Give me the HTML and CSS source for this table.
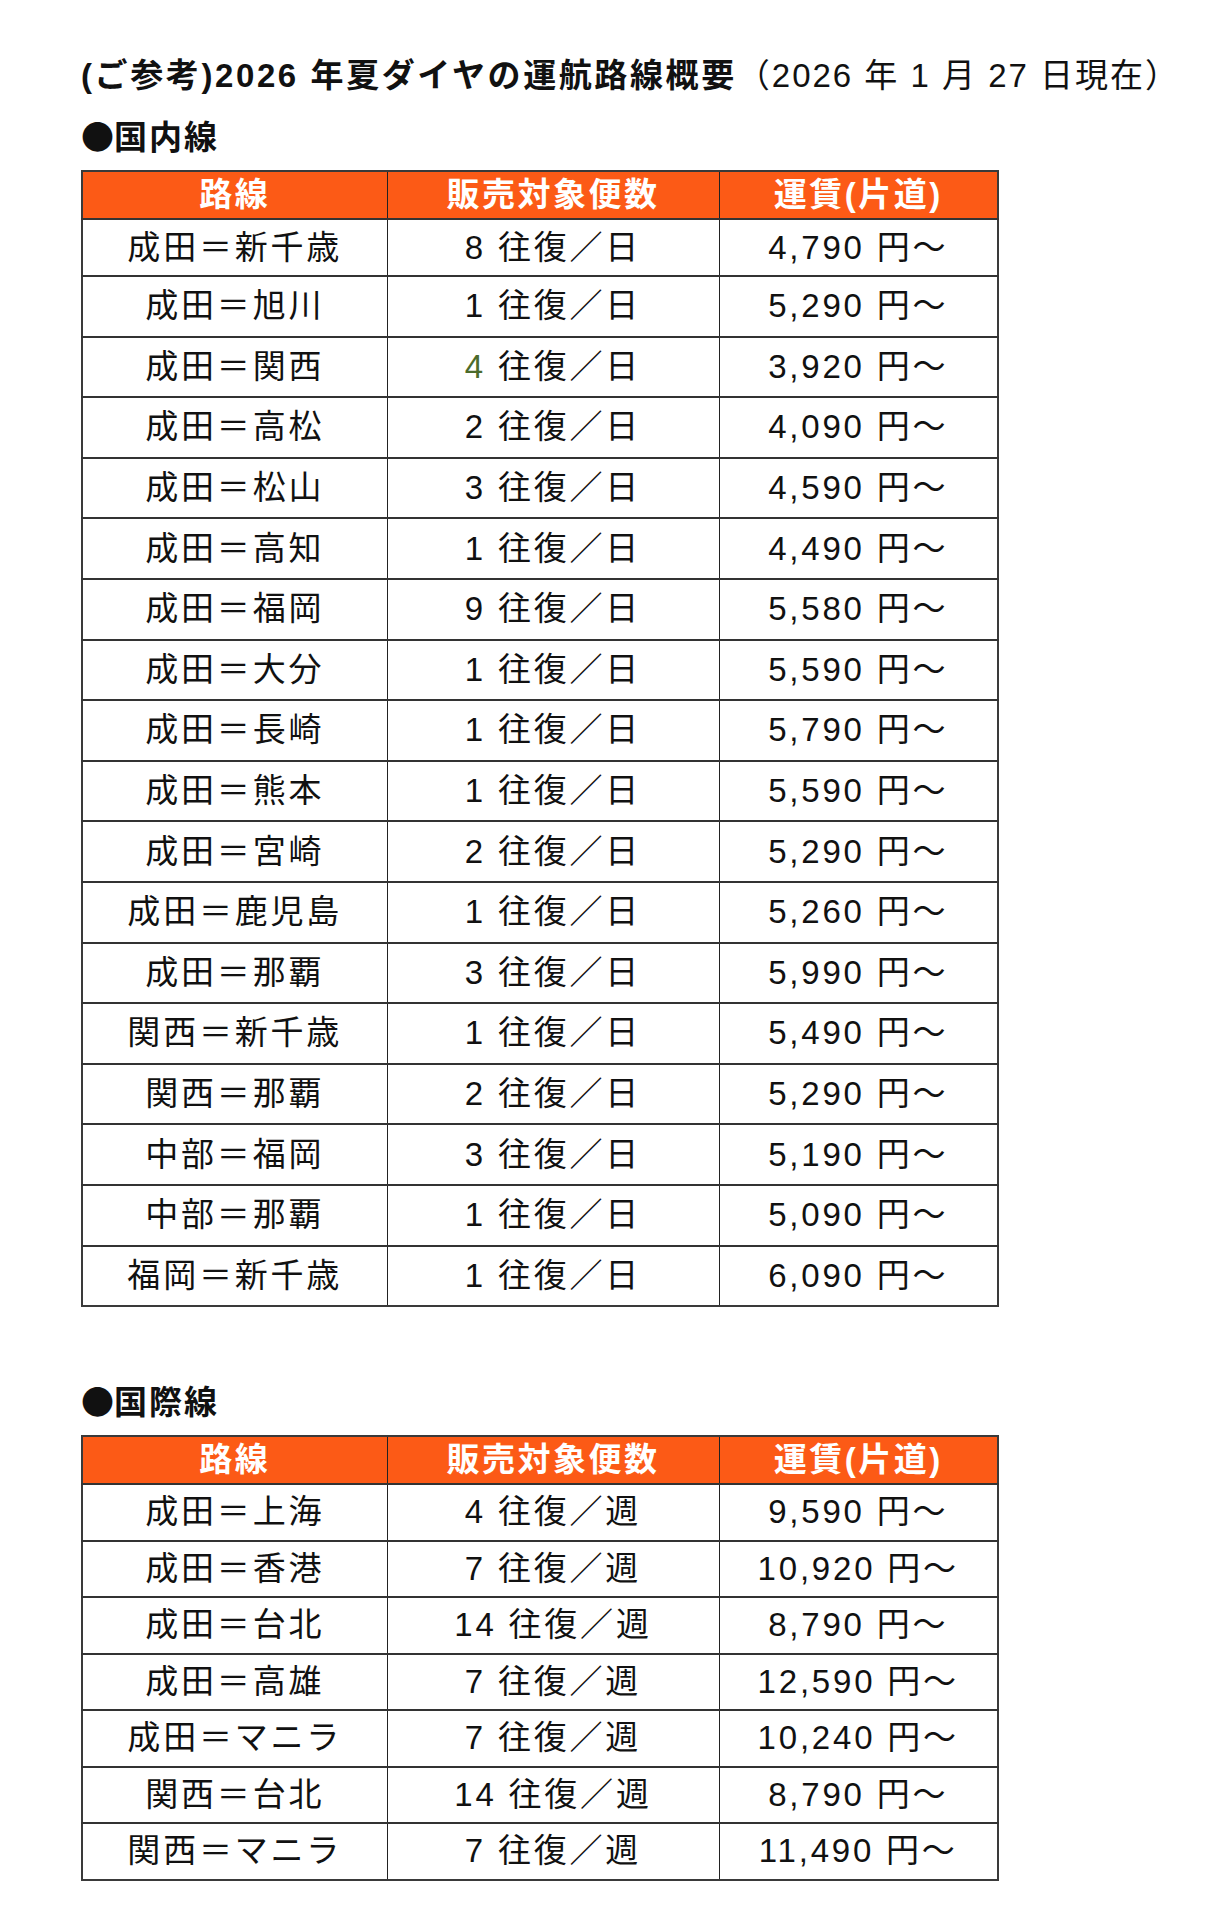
FILE: index.html
```html
<!DOCTYPE html>
<html lang="ja">
<head>
<meta charset="utf-8">
<title>2026年夏ダイヤの運航路線概要</title>
<link rel="stylesheet" href="styles.css">
</head>
<body>
<main class="page">
  <h1 class="title"><span class="title-main">(ご参考)2026 年夏ダイヤの運航路線概要</span><span class="title-date">（2026 年 1 月 27 日現在）</span></h1>

  <h2 class="section-head"><span class="bullet">●</span>国内線</h2>
  <table class="routes domestic">
    <colgroup><col class="c1"><col class="c2"><col class="c3"></colgroup>
    <thead>
      <tr><th>路線</th><th>販売対象便数</th><th>運賃(片道)</th></tr>
    </thead>
    <tbody>
      <tr class="first"><td>成田＝新千歳</td><td>8 往復／日</td><td>4,790 円〜</td></tr>
      <tr><td>成田＝旭川</td><td>1 往復／日</td><td>5,290 円〜</td></tr>
      <tr><td>成田＝関西</td><td><span class="green">4</span> 往復／日</td><td>3,920 円〜</td></tr>
      <tr><td>成田＝高松</td><td>2 往復／日</td><td>4,090 円〜</td></tr>
      <tr><td>成田＝松山</td><td>3 往復／日</td><td>4,590 円〜</td></tr>
      <tr><td>成田＝高知</td><td>1 往復／日</td><td>4,490 円〜</td></tr>
      <tr><td>成田＝福岡</td><td>9 往復／日</td><td>5,580 円〜</td></tr>
      <tr><td>成田＝大分</td><td>1 往復／日</td><td>5,590 円〜</td></tr>
      <tr><td>成田＝長崎</td><td>1 往復／日</td><td>5,790 円〜</td></tr>
      <tr><td>成田＝熊本</td><td>1 往復／日</td><td>5,590 円〜</td></tr>
      <tr><td>成田＝宮崎</td><td>2 往復／日</td><td>5,290 円〜</td></tr>
      <tr><td>成田＝鹿児島</td><td>1 往復／日</td><td>5,260 円〜</td></tr>
      <tr><td>成田＝那覇</td><td>3 往復／日</td><td>5,990 円〜</td></tr>
      <tr><td>関西＝新千歳</td><td>1 往復／日</td><td>5,490 円〜</td></tr>
      <tr><td>関西＝那覇</td><td>2 往復／日</td><td>5,290 円〜</td></tr>
      <tr><td>中部＝福岡</td><td>3 往復／日</td><td>5,190 円〜</td></tr>
      <tr><td>中部＝那覇</td><td>1 往復／日</td><td>5,090 円〜</td></tr>
      <tr><td>福岡＝新千歳</td><td>1 往復／日</td><td>6,090 円〜</td></tr>
    </tbody>
  </table>

  <h2 class="section-head intl-head"><span class="bullet">●</span>国際線</h2>
  <table class="routes intl">
    <colgroup><col class="c1"><col class="c2"><col class="c3"></colgroup>
    <thead>
      <tr><th>路線</th><th>販売対象便数</th><th>運賃(片道)</th></tr>
    </thead>
    <tbody>
      <tr><td>成田＝上海</td><td>4 往復／週</td><td>9,590 円〜</td></tr>
      <tr><td>成田＝香港</td><td>7 往復／週</td><td>10,920 円〜</td></tr>
      <tr><td>成田＝台北</td><td>14 往復／週</td><td>8,790 円〜</td></tr>
      <tr><td>成田＝高雄</td><td>7 往復／週</td><td>12,590 円〜</td></tr>
      <tr><td>成田＝マニラ</td><td>7 往復／週</td><td>10,240 円〜</td></tr>
      <tr><td>関西＝台北</td><td>14 往復／週</td><td>8,790 円〜</td></tr>
      <tr><td>関西＝マニラ</td><td>7 往復／週</td><td>11,490 円〜</td></tr>
    </tbody>
  </table>
</main>
</body>
</html>
```

FILE: styles.css
```css
html, body {
  margin: 0;
  padding: 0;
  background: #ffffff;
}

body {
  font-family: "Liberation Sans", "Noto Sans CJK JP", sans-serif;
  color: #111111;
}

.page {
  padding: 56px 0 0 81px;
}

.title {
  margin: 0;
  font-size: 33px;
  line-height: 40px;
  height: 40px;
  font-weight: normal;
  white-space: nowrap;
}

.title-main {
  font-weight: bold;
  letter-spacing: 2.6px;
}

.title-date {
  font-weight: normal;
  letter-spacing: 2px;
}

.section-head {
  margin: 22px 0 12px 0;
  font-size: 33px;
  line-height: 40px;
  height: 40px;
  font-weight: bold;
  letter-spacing: 2px;
}

.bullet {
  font-family: "Noto Sans CJK JP", sans-serif;
  font-weight: bold;
  letter-spacing: 0;
  line-height: 1;
}

.intl-head {
  margin-top: 76px;
}

.routes {
  border-collapse: collapse;
  width: 916px;
  table-layout: fixed;
  border: 2px solid #3a3a3a;
}

.routes .c1 { width: 305px; }
.routes .c2 { width: 332px; }
.routes .c3 { width: 279px; }

.routes th,
.routes td {
  border: 1px solid #222222;
  text-align: center;
  padding: 0;
  white-space: nowrap;
  line-height: 38px;
}

.routes tbody tr {
  border-top: 2px solid #333333;
}

.routes th {
  background: #fc5a16;
  color: #ffffff;
  font-weight: bold;
  font-size: 33px;
  letter-spacing: 2.5px;
  height: 46px;
}

.routes td {
  font-size: 33px;
  letter-spacing: 2.8px;
  color: #111111;
}

.domestic tbody tr {
  height: 60.6px;
}

.domestic tbody tr.first {
  height: 57px;
}

.intl tbody tr {
  height: 56.5px;
}

.green {
  color: #4b6b2b;
}
```
